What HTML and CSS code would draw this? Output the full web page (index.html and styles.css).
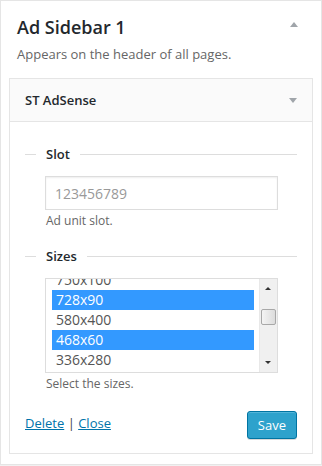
FILE: index.html
```html
<!DOCTYPE html>
<html lang="en">
<head>
    <meta charset="UTF-8">
    <meta name="viewport" content="width=device-width, initial-scale=1.0">
    <title>Ad Sidebar 1</title>
    <link rel="stylesheet" href="styles.css">
</head>
<body>
    <!-- Sidebar box -->
    <div class="sidebar">
        <div class="sidebar-head">
            <h2 class="sidebar-title">Ad Sidebar 1</h2>
            <span class="arrow-up"></span>
        </div>
        <p class="sidebar-desc">Appears on the header of all pages.</p>

        <!-- Widget -->
        <div class="widget">
            <div class="widget-top">
                <h3 class="widget-title">ST AdSense</h3>
                <span class="arrow-down"></span>
            </div>
            <div class="widget-inside">
                <div class="field">
                    <div class="field-title">Slot</div>
                    <input class="input-slot" type="text" placeholder="123456789">
                    <p class="hint">Ad unit slot.</p>
                </div>

                <div class="field">
                    <div class="field-title">Sizes</div>
                    <div class="listbox">
                        <div class="listbox-items">
                            <div class="option">750x100</div>
                            <div class="option selected">728x90</div>
                            <div class="option">580x400</div>
                            <div class="option selected">468x60</div>
                            <div class="option">336x280</div>
                        </div>
                        <div class="scrollbar">
                            <span class="sb-up"></span>
                            <span class="sb-thumb"></span>
                            <span class="sb-down"></span>
                        </div>
                    </div>
                    <p class="hint">Select the sizes.</p>
                </div>

                <div class="widget-actions">
                    <div class="links"><a href="#">Delete</a> | <a href="#">Close</a></div>
                    <button class="btn-save">Save</button>
                </div>
            </div>
        </div>
    </div>
</body>
</html>
```

FILE: styles.css
```css
body {
    margin: 0;
    font-family: 'Open Sans', 'Liberation Sans', sans-serif;
    background: #f1f1f1;
}
.sidebar {
    width: 322px;
    height: 465px;
    box-sizing: border-box;
    background: #fff;
    border: 1px solid #e5e5e5;
    padding: 0 8px;
}
.sidebar-head {
    display: flex;
    justify-content: space-between;
    align-items: center;
    padding: 13px 15px 0 8px;
}
.sidebar-title {
    margin: 0;
    font-size: 18px;
    font-weight: 600;
    line-height: 26px;
    color: #23282d;
}
.arrow-up {
    width: 0;
    height: 0;
    border-left: 4px solid transparent;
    border-right: 4px solid transparent;
    border-bottom: 5px solid #a0a5aa;
    margin-bottom: 6px;
}
.sidebar-desc {
    margin: 3px 0 0 8px;
    font-size: 13px;
    line-height: 22px;
    color: #666;
}
.widget {
    margin-top: 13px;
    border: 1px solid #e5e5e5;
    background: #fff;
}
.widget-top {
    display: flex;
    justify-content: space-between;
    align-items: center;
    height: 42px;
    padding: 0 15px;
    background: #fafafa;
    border-bottom: 1px solid #e5e5e5;
}
.widget-title {
    margin: 0;
    font-size: 13px;
    font-weight: 600;
    color: #23282d;
}
.arrow-down {
    width: 0;
    height: 0;
    border-left: 4px solid transparent;
    border-right: 4px solid transparent;
    border-top: 5px solid #a0a5aa;
}
.widget-inside {
    padding: 22px 15px 14px;
}
.field {
    margin-bottom: 16px;
}
.field-title {
    display: flex;
    align-items: center;
    gap: 10px;
    font-size: 13px;
    font-weight: 600;
    line-height: 20px;
    color: #23282d;
    margin-bottom: 12px;
}
.field-title::before {
    content: '';
    width: 11px;
    height: 1px;
    background: #ddd;
}
.field-title::after {
    content: '';
    flex: 1;
    height: 1px;
    background: #ddd;
}
.input-slot {
    display: block;
    box-sizing: border-box;
    width: 233px;
    height: 34px;
    margin-left: 20px;
    padding: 0 9px;
    font-family: inherit;
    font-size: 14px;
    border: 1px solid #ddd;
    box-shadow: inset 0 1px 2px rgba(0, 0, 0, 0.07);
}
.input-slot::placeholder {
    color: #999;
}
.hint {
    margin: 2px 0 0 21px;
    font-size: 12px;
    line-height: 18px;
    color: #666;
}
.listbox {
    display: flex;
    width: 233px;
    height: 95px;
    box-sizing: border-box;
    margin-left: 20px;
    border: 1px solid #ddd;
    overflow: hidden;
}
.listbox-items {
    flex: 1;
    padding: 0 5px 0 6px;
    margin-top: -9px;
}
.option {
    height: 20px;
    line-height: 20px;
    padding-left: 4px;
    font-size: 14px;
    color: #555;
}
.option.selected {
    background: #3399ff;
    color: #fff;
}
.scrollbar {
    position: relative;
    width: 17px;
    background: #f0f0f0;
    border-left: 1px solid #e8e8e8;
}
.sb-up, .sb-down {
    position: absolute;
    left: 5px;
    width: 0;
    height: 0;
    border-left: 3px solid transparent;
    border-right: 3px solid transparent;
}
.sb-up {
    top: 8px;
    border-bottom: 3px solid #333;
}
.sb-down {
    bottom: 8px;
    border-top: 3px solid #333;
}
.sb-thumb {
    position: absolute;
    top: 30px;
    left: 1px;
    width: 13px;
    height: 14px;
    border: 1px solid #a8a8a8;
    border-radius: 2px;
    background: linear-gradient(to right, #f4f4f4, #dcdcdc);
}
.widget-actions {
    display: flex;
    justify-content: space-between;
    align-items: center;
    margin-top: 18px;
}
.links {
    font-size: 13px;
    color: #444;
    margin-top: -4px;
}
.links a {
    color: #0073aa;
}
.btn-save {
    height: 28px;
    padding: 0 10px;
    font-family: inherit;
    font-size: 13px;
    color: #fff;
    background: #2ea2cc;
    border: 1px solid #0074a2;
    border-radius: 3px;
    box-shadow: inset 0 1px 0 rgba(120, 200, 230, 0.5), 0 1px 0 rgba(0, 0, 0, 0.15);
    cursor: pointer;
}
```
